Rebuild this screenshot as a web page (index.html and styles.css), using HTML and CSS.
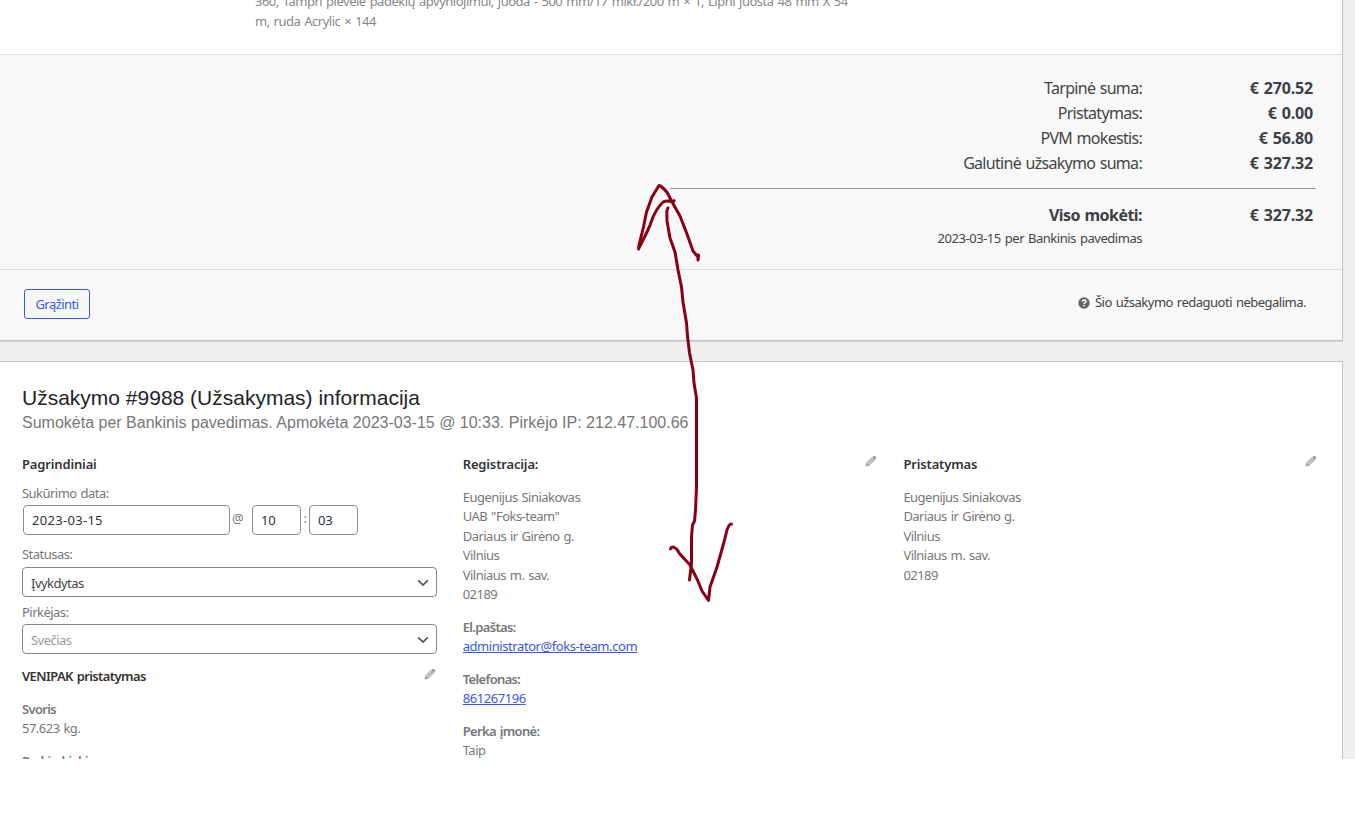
FILE: index.html
```html
<!DOCTYPE html>
<html lang="lt">
  <head>
    <meta charset="UTF-8" />
    <meta name="viewport" content="width=device-width, initial-scale=1.0" />
    <title>Užsakymas #9988</title>
    <link rel="stylesheet" href="styles.css">
  </head>
  <body>
    <svg class="symbols" width="0" height="0">
      <symbol id="pencil" viewBox="0 0 12 12">
        <path d="M1 11 L2 7.6 L7.6 1.9 L10.1 4.4 L4.4 10 Z" fill="#d6d6d6" stroke="#999" stroke-width="1" />
        <path d="M3.6 8.6 L8.2 4" stroke="#999" stroke-width="0.9" />
        <path d="M7.6 1.9 L8.7 0.9 Q9.4 0.5 10.1 1.1 L10.9 1.9 Q11.5 2.6 11 3.4 L10.1 4.4 Z M1 11 L1.7 8.6 L3.4 10.3 Z" fill="#999" />
      </symbol>
    </svg>
    <div class="screen">
      <div class="postbox items">
        <div class="item-meta">
          360, Tampri plėvelė padėklų apvyniojimui, juoda - 500 mm/17 mikr./200 m × 1, Lipni juosta 48 mm X 54<br />
          m, ruda Acrylic × 144
        </div>
        <div class="totals">
          <dl class="total-rows">
            <dt>Tarpinė suma:</dt><dd>€ 270.52</dd>
            <dt>Pristatymas:</dt><dd>€ 0.00</dd>
            <dt>PVM mokestis:</dt><dd>€ 56.80</dd>
            <dt>Galutinė užsakymo suma:</dt><dd>€ 327.32</dd>
          </dl>
          <dl class="total-rows paid">
            <dt class="strong">Viso mokėti:</dt><dd>€ 327.32</dd>
            <dt class="description">2023-03-15 per Bankinis pavedimas</dt>
          </dl>
        </div>
        <div class="actions">
          <button class="button" type="button">Grąžinti</button>
          <span class="locked">
            <svg class="help" viewBox="0 0 12 12">
              <circle cx="6" cy="6" r="5.7" fill="#646464" />
              <path d="M4.2 4.6 Q4.3 2.9 6.1 2.9 Q7.9 2.9 7.9 4.3 Q7.9 5.2 6.8 5.8 Q6.1 6.2 6.1 7" fill="none" stroke="#fff" stroke-width="1.5" />
              <rect x="5.3" y="7.9" width="1.6" height="1.5" fill="#fff" />
            </svg>
            <span>Šio užsakymo redaguoti nebegalima.</span>
          </span>
        </div>
      </div>

      <div class="postbox order">
        <h2>Užsakymo #9988 (Užsakymas) informacija</h2>
        <p class="order-number">Sumokėta per Bankinis pavedimas. Apmokėta 2023-03-15 @ 10:33. Pirkėjo IP: 212.47.100.66</p>
        <div class="columns">
          <div class="column">
            <h3><span>Pagrindiniai</span></h3>
            <label class="label-date" for="date">Sukūrimo data:</label>
            <div class="date-row">
              <input type="text" class="date" id="date" value="2023-03-15" />
              <span class="at">@</span>
              <input type="text" class="time" value="10" />
              <span class="colon">:</span>
              <input type="text" class="time" value="03" />
            </div>
            <label class="label-status">Statusas:</label>
            <div class="select">
              <span>Įvykdytas</span>
              <svg class="arrow" viewBox="0 0 12 8"><path d="M1.2 1.3 L6 6 L10.8 1.3" /></svg>
            </div>
            <label class="label-customer">Pirkėjas:</label>
            <div class="select empty">
              <span>Svečias</span>
              <svg class="arrow" viewBox="0 0 12 8"><path d="M1.2 1.3 L6 6 L10.8 1.3" /></svg>
            </div>
            <h3 class="venipak">
              <span>VENIPAK pristatymas</span>
              <svg class="edit"><use href="#pencil" /></svg>
            </h3>
            <p><strong>Svoris</strong><br />57.623 kg.</p>
            <p class="quantity"><strong>Prekių kiekis</strong></p>
          </div>
          <div class="column">
            <h3>
              <span>Registracija:</span>
              <svg class="edit"><use href="#pencil" /></svg>
            </h3>
            <p class="address">
              Eugenijus Siniakovas<br />
              UAB "Foks-team"<br />
              Dariaus ir Girėno g.<br />
              Vilnius<br />
              Vilniaus m. sav.<br />
              02189
            </p>
            <p><strong>El.paštas:</strong><br /><a href="#">administrator@foks-team.com</a></p>
            <p><strong>Telefonas:</strong><br /><a href="#">861267196</a></p>
            <p><strong>Perka įmonė:</strong><br />Taip</p>
          </div>
          <div class="column">
            <h3>
              <span>Pristatymas</span>
              <svg class="edit"><use href="#pencil" /></svg>
            </h3>
            <p class="address">
              Eugenijus Siniakovas<br />
              Dariaus ir Girėno g.<br />
              Vilnius<br />
              Vilniaus m. sav.<br />
              02189
            </p>
          </div>
        </div>
      </div>

      <!-- hand drawn double arrow -->
      <svg class="scribble" viewBox="0 0 110 430">
        <path d="M44 20.700 L43 22 Q37 20 33 22 Q27 28 23 37 Q20 46 17 52 L8.500 69 L9 65 L13.500 47 L16.500 32 L22 17 L29 5.500 Q33 7 37.500 13 L41.500 21 L50 36 L57 54 L63 71 L68 77 L68 80 L68.500 75" />
        <path d="M38 28 L36.800 31 L37 41 L40 58 L45 72 L48 90 L51.500 107 L53 122 L56.500 143 L57.500 156 L59.500 173 L63 190 L64 203 L66.500 218 L66.500 307 L65.500 330 L64.500 341 L62.500 345 L61.500 357 L61.500 383 L59.500 400" />
        <path d="M40.500 369 Q41 367 43 367 Q47 368 49 373 L60 385 L67.500 400 L72 411 L78.500 420.500 L80 407 L87 387 L94 362 L97 350 Q99 344 101.500 344" />
      </svg>
    </div>
  </body>
</html>
```
FILE: styles.css
```css
body {
  margin: 0;
  background: #fff;
  font-family: "Noto Sans", sans-serif;
  font-size: 13px;
  line-height: 19.5px;
  letter-spacing: -0.53px;
  word-spacing: 1px;
  color: #777;
}
h2, h3, p, dl, dd {
  margin: 0;
}
.symbols {
  display: block;
}
.screen {
  position: relative;
  height: 759px;
  overflow: hidden;
  background: #f0f0f0;
}
.postbox {
  width: 1342px;
  border-right: 1px solid #c3c4c7;
  background: #fff;
}
.items {
  border-bottom: 1px solid #c3c4c7;
  box-shadow: 0 1px 1px rgba(0, 0, 0, 0.1);
  margin-bottom: 20px;
}
.item-meta {
  height: 62px;
  margin-top: -8px;
  padding-left: 255px;
  color: #888;
  letter-spacing: -0.5px;
  word-spacing: 1.1px;
  white-space: nowrap;
}
.totals {
  height: 214px;
  border-top: 1px solid #dfdfdf;
  background: #f8f8f8;
}
.total-rows {
  display: grid;
  grid-template-columns: 1fr 170px;
  margin: 0 26px 0 670px;
  padding: 21px 3px 12px 0;
  font-size: 16px;
  line-height: 25px;
  letter-spacing: -0.7px;
  text-align: right;
  color: #444;
}
.total-rows dt {
  padding-right: 1px;
}
.total-rows dd,
.total-rows .strong {
  font-weight: 700;
  letter-spacing: -0.55px;
  color: #3c3f45;
}
.total-rows dd {
  letter-spacing: -0.15px;
}
.total-rows.paid {
  border-top: 1px solid #999;
  padding-top: 14px;
}
.total-rows .description {
  font-size: 13px;
  line-height: 20px;
  letter-spacing: -0.46px;
}
.actions {
  display: flex;
  justify-content: space-between;
  align-items: flex-start;
  height: 51px;
  padding: 19px 36px 0 24px;
  border-top: 1px solid #dfdfdf;
  background: #f8f8f8;
}
.button {
  width: 66px;
  height: 30px;
  padding: 1px 0 0;
  border: 1px solid #3858e9;
  border-radius: 3px;
  background: #f6f7f7;
  color: #3858e9;
  font: inherit;
  letter-spacing: inherit;
}
.locked {
  display: flex;
  align-items: center;
  gap: 5px;
  margin-top: 4px;
  letter-spacing: -0.5px;
  color: #444;
}
.help {
  width: 12px;
  height: 12px;
}
.order {
  box-sizing: border-box;
  width: 1343px;
  height: 420px;
  padding: 23px 24px 0 22px;
  border-top: 1px solid #c3c4c7;
}
.order h2 {
  font: 400 21px/26px "Liberation Sans", sans-serif;
  letter-spacing: 0;
  word-spacing: 0;
  color: #1d2327;
}
.order-number {
  font: 16px/24px "Liberation Sans", sans-serif;
  letter-spacing: 0;
  word-spacing: 0;
}
.columns {
  display: grid;
  grid-template-columns: repeat(3, 415px);
  column-gap: 25.7px;
  padding-top: 19px;
}
.column {
  display: flex;
  flex-direction: column;
}
.column h3 {
  display: flex;
  justify-content: space-between;
  font-size: 13px;
  line-height: 20px;
  font-weight: 600;
  letter-spacing: -0.15px;
  color: #333;
}
.column p {
  margin-bottom: 13px;
  letter-spacing: -0.52px;
}
.column .address {
  margin-top: 13.5px;
}
.column strong {
  font-weight: 600;
  letter-spacing: -0.65px;
}
.column a {
  color: #3858e9;
  letter-spacing: -0.43px;
}
.edit {
  width: 12px;
  height: 12px;
  margin: 1px 1px 0 0;
}
.label-date {
  margin-top: 10px;
}
.date-row {
  display: flex;
  margin: 1px 0 0 1px;
}
.date-row input {
  box-sizing: border-box;
  height: 30px;
  padding: 0 8px;
  border: 1px solid #8c8f94;
  border-radius: 4px;
  font: inherit;
  letter-spacing: 0.3px;
  color: #2c3338;
}
.date-row .date {
  width: 207px;
}
.date-row .time {
  width: 49px;
  letter-spacing: -0.1px;
}
.at {
  width: 22px;
  padding-top: 4px;
  text-indent: 2px;
  box-sizing: border-box;
}
.colon {
  width: 8px;
  padding-top: 4px;
  text-align: center;
}
.label-status {
  margin-top: 10px;
}
.select {
  display: flex;
  justify-content: space-between;
  align-items: center;
  box-sizing: border-box;
  height: 30px;
  margin-top: 3px;
  padding: 0 7px 0 8px;
  border: 1px solid #7e8993;
  border-radius: 4px;
  color: #444;
}
.select span {
  padding-top: 3px;
}
.label-customer {
  margin-top: 5.5px;
}
.label-customer + .select {
  margin-top: 2px;
}
.select.empty {
  color: #999;
}
.arrow {
  width: 12px;
  height: 8px;
  margin-top: 1px;
}
.arrow path {
  fill: none;
  stroke: #555;
  stroke-width: 1.7;
}
.column .venipak {
  margin: 12px 0 13.5px;
  letter-spacing: -0.6px;
}
.venipak .edit {
  margin-top: 2px;
}
.quantity {
  padding-top: 0.5px;
}
.column .quantity strong {
  letter-spacing: -0.8px;
}
.scribble {
  position: absolute;
  left: 630px;
  top: 180px;
  width: 110px;
  height: 430px;
}
.scribble path {
  fill: none;
  stroke: #880015;
  stroke-width: 3;
  stroke-linecap: round;
  stroke-linejoin: round;
}
```
